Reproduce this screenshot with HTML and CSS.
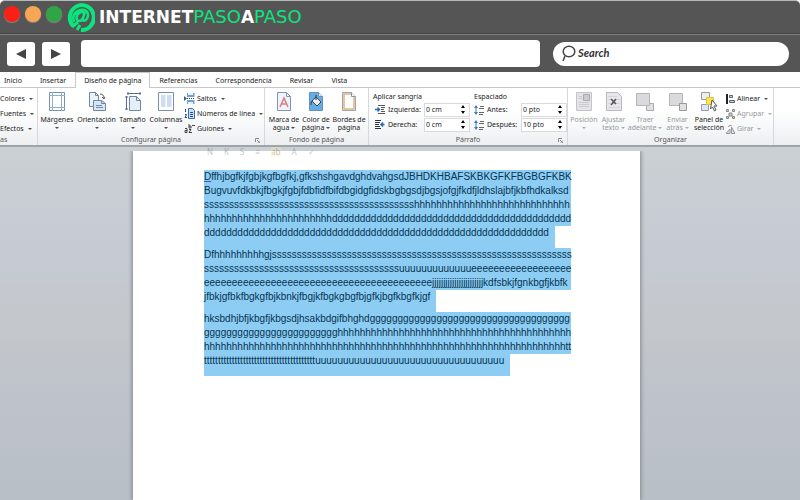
FILE: index.html
```html
<!DOCTYPE html>
<html lang="es">

<head>
    <meta charset="UTF-8">
    <meta name="viewport" content="width=device-width, initial-scale=1.0">
    <title>Internet Paso a Paso</title>
    <link rel="stylesheet" href="styles.css">
</head>

<body>
    <header class="browser">
        <div class="titlebar">
            <span class="dot red"></span>
            <span class="dot orange"></span>
            <span class="dot green"></span>
            <a class="logo" href="#">
                <svg width="28" height="30" viewBox="0 0 28 30" fill="none" stroke="#0be57d">
                    <path d="M6 24A12 12.500 0 1 1 14 28" stroke-width="4"/>
                    <path d="M5 25l6-5M10 28l3-5" stroke-width="3"/>
                    <path d="M18 10l-3 9M17.500 12c-2-4-8-1-8 4 0 4 5 4 6 0M15 18c3 2 6-1 6-5 0-4-4-6-8-5-6 2-8 7-6 12" stroke-width="2.500"/>
                </svg>
                <span class="brand">INTERNET<b>PASO</b>A<b>PASO</b></span>
            </a>
        </div>
        <form class="navbar">
            <button type="button" class="nav-btn" aria-label="Atrás"><svg width="10" height="10" viewBox="0 0 10 10"><path d="M0 5l10-5v10z" fill="#444"/></svg></button>
            <button type="button" class="nav-btn" aria-label="Adelante"><svg width="10" height="10" viewBox="0 0 10 10"><path d="M10 5L0 0v10z" fill="#444"/></svg></button>
            <input class="address" type="text" aria-label="Dirección">
            <label class="search">
                <svg width="15" height="17" viewBox="0 0 15 17" fill="none" stroke="#444" stroke-width="1.500"><ellipse cx="8" cy="6.500" rx="5.800" ry="5.300"/><path d="M4 11l-2 5"/></svg>
                <input type="text" value="Search" aria-label="Search">
            </label>
        </form>
    </header>

    <nav class="tabs">
        <a href="#">Inicio</a>
        <a href="#">Insertar</a>
        <a href="#" class="current">Diseño de página</a>
        <a href="#">Referencias</a>
        <a href="#">Correspondencia</a>
        <a href="#">Revisar</a>
        <a href="#">Vista</a>
    </nav>

    <section class="ribbon">
        <div class="group themes">
            <div class="tools">
                <div class="stack">
                    <button class="small">Colores <i></i></button>
                    <button class="small">Fuentes <i></i></button>
                    <button class="small">Efectos <i></i></button>
                </div>
            </div>
            <h2>as</h2>
        </div>

        <div class="group setup">
            <div class="tools">
                <button class="big">
                    <svg width="18" height="21" viewBox="0 0 18 21"><path d="M1.500 1.500h15v18h-15z" fill="#fff" stroke="#7b8fa8"/><path d="M4.500 1v19M13.500 1v19M1 4.500h16M1 16.500h16" stroke="#8eb0d0"/></svg>
                    <span>Márgenes</span><i></i>
                </button>
                <button class="big">
                    <svg width="18" height="21" viewBox="0 0 18 21" stroke="#7386a0"><path d="M1.500 1.500h6l3 3v11h-9z" fill="#eaf2fa"/><path d="M7.500 1.500v3h3" fill="none"/><path d="M5.500 9.500h8l4 3v7h-12z" fill="#d5e6f6"/><path d="M13.500 9.500v3h4M8 14.500h6M8 16.500h7" fill="none"/><path d="M12 3c3 0 4 2 4 4m-2-1l2 2 1-2" fill="none" stroke="#555"/></svg>
                    <span>Orientación</span><i></i>
                </button>
                <button class="big">
                    <svg width="18" height="21" viewBox="0 0 18 21"><path d="M5.500 5.500h7l4 4v10h-11z" fill="#e4effa" stroke="#7386a0"/><path d="M12.500 5.500v4h4" fill="none" stroke="#7386a0"/><path d="M3 2.500h14M4 1v3M16 1v3M2.500 5v14M1 6h3M1 18h3" stroke="#5a6ba0"/></svg>
                    <span>Tamaño</span><i></i>
                </button>
                <button class="big">
                    <svg width="18" height="21" viewBox="0 0 18 21"><path d="M1.500 1.500h15v18h-15z" fill="#fff" stroke="#7b8fa8"/><path d="M4 5h4.500M4 7h4.500M4 9h4.500M4 11h4.500M4 13h4.500M4 15h4.500M10 5h4.500M10 7h4.500M10 9h4.500M10 11h4.500M10 13h4.500M10 15h4.500" stroke="#9dbbe0"/></svg>
                    <span>Columnas</span><i></i>
                </button>
                <div class="stack">
                    <button class="small"><svg width="11" height="11" viewBox="0 0 11 11"><path d="M3 0h7.500v4H3zM3 7h7.500v4H3z" fill="#6fa0d6"/><path d="M4 0h5v2H4zM4 9h5v2H4z" fill="#e8f2fc"/><path d="M0 3l3 2.500L0 8z" fill="#34648f"/><path d="M3 5.500h8" stroke="#444" stroke-dasharray="1 1"/></svg>Saltos <i></i></button>
                    <button class="small"><svg width="11" height="11" viewBox="0 0 11 11"><path d="M4.500.5h4l2 2v8h-6z" fill="#c9dff5" stroke="#426ca8"/><path d="M1.500 1v3M1 6.500h1.500L1 9.500h2M6 4.500h3M6 6.500h3M6 8.500h3" stroke="#234f96" fill="none"/></svg>Números de línea <i></i></button>
                    <button class="small"><svg width="11" height="11" viewBox="0 0 11 11" fill="none" stroke="#444"><path d="M1 5.500h2v4H1v-2h2M5 1v4h2V3H5M5 6.500h2l-2 3h3M8 2.500h3"/></svg>Guiones <i></i></button>
                </div>
            </div>
            <h2>Configurar página</h2>
            <svg class="launcher" width="5" height="5" viewBox="0 0 5 5"><path d="M.5 4V.5H4M2 2l2.500 2.500M5 2.500V5H2.500" fill="none" stroke="#888"/></svg>
        </div>

        <div class="group background">
            <div class="tools">
                <button class="big">
                    <svg width="16" height="21" viewBox="0 0 16 21"><path d="M1.500 1.500h9l4 4v14h-13z" fill="#edf4fc" stroke="#8295b0"/><path d="M10.500 1.500v4h4" fill="none" stroke="#8295b0"/><path d="M4 16l4-9 4 9M5.500 13h5" fill="none" stroke="#dc7c7c" stroke-width="1.500"/></svg>
                    <span>Marca de<br>agua <i></i></span>
                </button>
                <button class="big">
                    <svg width="16" height="21" viewBox="0 0 16 21"><path d="M1.500 1.500h9l4 4v14h-13z" fill="#62aee8" stroke="#6c8fb8"/><path d="M10.500 1.500v4h4" fill="#dceafa" stroke="#6c8fb8"/><path d="M4 10l4-4 5 5-4 4z" fill="#e8edf2" stroke="#444"/><path d="M4 10c-1 1-1 3-1 4M8 9V4" stroke="#333" fill="none"/></svg>
                    <span>Color de<br>página <i></i></span>
                </button>
                <button class="big">
                    <svg width="16" height="21" viewBox="0 0 16 21"><path d="M1.500 1.500h9l4 4v14h-13z" fill="#fff" stroke="#9aa6b8"/><path d="M3 3h7l3 3v12H3z" fill="#fff" stroke="#e3b27c" stroke-width="1.500"/><path d="M10.500 1.500v4h4" fill="#fff" stroke="#8295b0"/></svg>
                    <span>Bordes de<br>página</span>
                </button>
            </div>
            <h2>Fondo de página</h2>
        </div>

        <div class="group paragraph">
            <div class="tools">
                <fieldset>
                    <legend>Aplicar sangría</legend>
                    <div class="field">
                        <svg width="10" height="9" viewBox="0 0 10 9"><path d="M3 .5h7M6 2.500h4M6 4.500h3M6 6.500h4M3 8.500h7" stroke="#555"/><path d="M0 4.500h4M2.500 2.500l2 2-2 2" stroke="#2868b8" fill="none" stroke-width="1.500"/></svg>
                        <label for="left">Izquierda:</label>
                        <span class="spin"><input id="left" type="text" value="0 cm"><svg width="4" height="9" viewBox="0 0 4 9"><path d="M2 0l2 3H0zM2 9l2-3H0z"/></svg></span>
                    </div>
                    <div class="field">
                        <svg width="10" height="9" viewBox="0 0 10 9"><path d="M0 .5h6M0 2.500h5M0 4.500h4M0 6.500h5M0 8.500h6" stroke="#333"/><path d="M9.500 4.500H6M8 2.500l-2 2 2 2" stroke="#2868b8" fill="none" stroke-width="1.500"/></svg>
                        <label for="right">Derecha:</label>
                        <span class="spin"><input id="right" type="text" value="0 cm"><svg width="4" height="9" viewBox="0 0 4 9"><path d="M2 0l2 3H0zM2 9l2-3H0z"/></svg></span>
                    </div>
                </fieldset>
                <fieldset class="spacing">
                    <legend>Espaciado</legend>
                    <div class="field">
                        <svg width="10" height="10" viewBox="0 0 10 10"><path d="M6 1.500h4M5 3.500h5M5 7.500h5M5 9.500h4" stroke="#666"/><path d="M2 0l2 3H0zM2 10l2-3H0zM1.500 3h1v4h-1z" fill="#3a78c4"/></svg>
                        <label for="before">Antes:</label>
                        <span class="spin"><input id="before" type="text" value="0 pto"><svg width="4" height="9" viewBox="0 0 4 9"><path d="M2 0l2 3H0zM2 9l2-3H0z"/></svg></span>
                    </div>
                    <div class="field">
                        <svg width="10" height="10" viewBox="0 0 10 10"><path d="M6 1.500h4M5 3.500h5M5 7.500h5M5 9.500h4" stroke="#666"/><path d="M2 0l2 3H0zM2 10l2-3H0zM1.500 3h1v4h-1z" fill="#3a78c4"/></svg>
                        <label for="after">Después:</label>
                        <span class="spin"><input id="after" type="text" value="10 pto"><svg width="4" height="9" viewBox="0 0 4 9"><path d="M2 0l2 3H0zM2 9l2-3H0z"/></svg></span>
                    </div>
                </fieldset>
            </div>
            <h2>Párrafo</h2>
            <svg class="launcher" width="5" height="5" viewBox="0 0 5 5"><path d="M.5 4V.5H4M2 2l2.500 2.500M5 2.500V5H2.500" fill="none" stroke="#888"/></svg>
        </div>

        <div class="group arrange">
            <div class="tools">
                <button class="big off">
                    <svg width="18" height="21" viewBox="0 0 18 21"><path d="M1.500 1.500h15v18h-15z" fill="#e4e4e8" stroke="#c4c4c8"/><path d="M8.500 3.500h6v6h-6z" fill="#ccc" stroke="#aaa"/><path d="M4 5.500h3M4 7.500h3M4 11.500h10M4 13.500h10M4 15.500h10" stroke="#ccc"/></svg>
                    <span>Posición</span><i></i>
                </button>
                <button class="big off">
                    <svg width="18" height="21" viewBox="0 0 18 21"><path d="M1.500 1.500h11l4 4v14h-15z" fill="#e8e8ec" stroke="#b8b8bd"/><path d="M3 5.500h9M3 8.500h12M3 12.500h12M3 16.500h12" stroke="#d4d4d4"/><path d="M6 8l5 5M11 8l-5 6" stroke="#555" stroke-width="1.500"/></svg>
                    <span>Ajustar<br>texto <i></i></span>
                </button>
                <button class="big off">
                    <svg width="20" height="21" viewBox="0 0 20 21"><path d="M11.500 12.500h7v7h-7z" fill="#e0e0e4" stroke="#aaa"/><path d="M1.500 2.500h13v12h-13z" fill="#dcd9de" stroke="#b4b4b8"/></svg>
                    <span>Traer<br>adelante <i></i></span>
                </button>
                <button class="big off">
                    <svg width="20" height="21" viewBox="0 0 20 21"><path d="M1.500 2.500h13v12h-13z" fill="#dcd9de" stroke="#b4b4b8"/><path d="M11.500 12.500h7v7h-7z" fill="#e0e0e4" stroke="#999"/></svg>
                    <span>Enviar<br>atrás <i></i></span>
                </button>
                <button class="big">
                    <svg width="18" height="21" viewBox="0 0 18 21"><path d="M1.500 1.500h8v7h-8z" fill="#eee" stroke="#999"/><path d="M1.500 13.500h7v6h-7z" fill="#dbe6f4" stroke="#99a"/><path d="M6.500 6.500h7v7h-7z" fill="#ffe54b" stroke="#e0c040"/><path d="M12 9l5 6h-3l2 4-1.500 1-2-4-2 2z" fill="#fff" stroke="#555"/></svg>
                    <span>Panel de<br>selección</span>
                </button>
                <div class="stack">
                    <button class="small"><svg width="9" height="10" viewBox="0 0 9 10"><path d="M1 0v10" stroke="#222" stroke-width="2"/><path d="M3.500 1.500h3v2h-3zM3.500 6.500h5v2h-5z" fill="#b9d2ee" stroke="#567"/></svg>Alinear <i></i></button>
                    <button class="small off"><svg width="9" height="10" viewBox="0 0 9 10"><path d="M.5.500h2v2h-2zM6.500.5h2v2h-2zM.5 7.500h2v2h-2zM6.500 7.500h2v2h-2zM3 4h3v3H3z" fill="#ccc" stroke="#888"/></svg>Agrupar <i></i></button>
                    <button class="small off"><svg width="9" height="10" viewBox="0 0 9 10"><path d="M0 9.500h4V5zM5.500 9.500V3L9 9.500zM2 3c1-2 3-2 4-1" fill="#ddd" stroke="#999"/></svg>Girar <i></i></button>
                </div>
            </div>
            <h2>Organizar</h2>
        </div>
    </section>

    <main class="desk">
        <div class="mini-toolbar" aria-hidden="true">
            <span>N</span><span>K</span><span>S</span><span>≡</span><span class="mark">ab</span><span>A</span><span>✓</span>
        </div>
        <article class="page">
            <p>
                <span><u>D</u>ffhjbgfkjfgbjkgfbgfkj,gfkshshgavdghdvahgsdJBHDKHBAFSKBKGFKFBGBGFKBK</span>
                <span>Bugvuvfdkbkjfbgkjfgbjfdbfidfbifdbgidgfidskbgbgsdjbgsjofgjfkdfjldhslajbfjkbfhdkalksd</span>
                <span>sssssssssssssssssssssssssssssssssssssssssshhhhhhhhhhhhhhhhhhhhhhhhhhhh</span>
                <span>hhhhhhhhhhhhhhhhhhhhhhhddddddddddddddddddddddddddddddddddddddddddd</span>
                <span>dddddddddddddddddddddddddddddddddddddddddddddddddddddddddddddd</span>
            </p>
            <p>
                <span>Dfhhhhhhhhhgjssssssssssssssssssssssssssssssssssssssssssssssssssssssssssss</span>
                <span>sssssssssssssssssssssssssssssssssssssssuuuuuuuuuuuuueeeeeeeeeeeeeeeeee</span>
                <span>eeeeeeeeeeeeeeeeeeeeeeeeeeeeeeeeeeeeeeeeejjjjjjjjjjjjjjjjjjjjjjjkdfsbkjfgnkbgfjkbfk</span>
                <span>jfbkjgfbkfbgkgfbjkbnkjfbgjkfbgkgbgfbjgfkjbgfkbgfkjgf</span>
            </p>
            <p>
                <span>hksbdhjbfjkbgfjkbgsdjhsakbdgifbhghdgggggggggggggggggggggggggggggggggggg</span>
                <span>gggggggggggggggggggggggghhhhhhhhhhhhhhhhhhhhhhhhhhhhhhhhhhhhhhhhhh</span>
                <span>hhhhhhhhhhhhhhhhhhhhhhhhhhhhhhhhhhhhhhhhhhhhhhhhhhhhhhhhhhhhhhhhhtt</span>
                <span>ttttttttttttttttttttttttttttttttttttttttuuuuuuuuuuuuuuuuuuuuuuuuuuuuuuuuuu</span>
            </p>
        </article>
    </main>
</body>

</html>
```
FILE: styles.css
```css
* {
    margin: 0;
    padding: 0;
    box-sizing: border-box;
}

body {
    display: flex;
    flex-direction: column;
    min-height: 100vh;
    background-color: #fff;
    font: 7px/9px "Noto Sans", sans-serif;
    color: #222;
}

a {
    color: inherit;
    text-decoration: none;
}

button,
input {
    border: 0;
    background: none;
    font: inherit;
    color: inherit;
}

/* browser frame */
.browser {
    background-color: #555;
    border-top: 1px solid #b5b9b5;
    border-radius: 5px 5px 0 0;
}

.titlebar {
    display: flex;
    align-items: center;
    gap: 5px;
    height: 33px;
    padding: 0 4px;
    border-bottom: 1px solid #444;
}

.dot {
    width: 16px;
    height: 16px;
    margin-bottom: 6px;
    border-radius: 50%;
    box-shadow: 0 1px 1px #888;
}

.red {
    background-color: #fb2015;
}

.orange {
    background-color: #f9a556;
}

.green {
    background-color: #2fa547;
}

.logo {
    display: flex;
    align-items: center;
}

.brand {
    padding-left: 4px;
    font: bold 17px/20px "DejaVu Sans", sans-serif;
    color: #fff;
}

.brand b {
    color: #0be57d;
    font-weight: normal;
    font-size: 18px;
}

.navbar {
    display: flex;
    align-items: center;
    height: 38px;
    padding: 0 11px 0 7px;
    border-top: 1px solid #808080;
}

.nav-btn {
    width: 28px;
    height: 24px;
    margin-right: 7px;
    background-color: #fff;
    border-radius: 3px;
}

.nav-btn svg {
    display: block;
    margin: 0 auto;
}

.address {
    flex: 1;
    height: 27px;
    margin: 0 13px 0 4px;
    padding: 0 8px;
    background-color: #fff;
    border-radius: 4px;
    font-size: 12px;
}

.search {
    display: flex;
    align-items: center;
    gap: 2px;
    width: 236px;
    height: 24px;
    padding: 0 8px;
    background-color: #fff;
    border-radius: 12px;
}

.search input {
    flex: 1;
    min-width: 0;
    height: 18px;
    padding-bottom: 3px;
    font: italic bold 11px/15px Lato, cursive;
    color: #333;
}

/* ribbon tabs */
.tabs {
    display: flex;
    height: 16px;
    padding-left: 4px;
    border-bottom: 1px solid #c5c8cc;
    line-height: 17px;
    white-space: nowrap;
}

.tabs a {
    padding: 0 9px;
}

.tabs a:first-child {
    padding-left: 0;
}

.tabs .current {
    height: 16px;
    padding: 0 8px;
    background-color: #fff;
    border: 1px solid #c5c8cc;
    border-width: 1px 1px 0;
    line-height: 15px;
}

/* ribbon */
.ribbon {
    display: flex;
    height: 59px;
    background: linear-gradient(#fff 40%, #eceef1);
    border-bottom: 2px solid #a0a5aa;
    white-space: nowrap;
}

.group {
    display: flex;
    flex-direction: column;
    position: relative;
    border-right: 1px solid #d5d8dc;
}

.tools {
    display: grid;
    height: 47px;
    padding-top: 3px;
}

.group h2 {
    font-size: 7px;
    line-height: 9px;
    font-weight: normal;
    text-align: center;
    color: #555;
}

.launcher {
    position: absolute;
    right: 4px;
    bottom: 2px;
}

.themes {
    width: 38px;
}

.themes h2 {
    text-align: left;
}

.setup {
    width: 227px;
}

.setup .tools {
    grid-template-columns: 38px 41px 31px 36px 1fr;
}

.background {
    width: 104px;
}

.background .tools {
    grid-template-columns: 32px 32px 34px;
    padding-left: 3px;
}

.paragraph {
    width: 199px;
}

.paragraph .tools {
    grid-template-columns: 101px 93px;
    padding-left: 4px;
}

.arrange {
    width: 206px;
}

.arrange .tools {
    grid-template-columns: 32px 27px 36px 29px 34px 1fr;
}

.big {
    display: flex;
    flex-direction: column;
    align-items: center;
    line-height: 8px;
}

.big svg {
    flex: none;
    margin-bottom: 4px;
}

.small {
    display: flex;
    align-items: center;
    gap: 2px;
    height: 15px;
}

.off {
    color: #999;
}

/* drop-down arrow */
i {
    display: inline-block;
    border: 2px solid transparent;
    border-top-color: currentColor;
    border-bottom: 0;
    vertical-align: middle;
    opacity: 0.8;
}

.big > i {
    margin-top: 3px;
}

.small i {
    margin-left: 2px;
}

fieldset {
    border: 0;
}

legend {
    height: 11px;
    line-height: 12px;
}

.field {
    display: flex;
    align-items: center;
    height: 15px;
    padding-left: 2px;
}

.spacing .field {
    padding-left: 0;
}

.field label {
    flex: 1;
    padding-left: 3px;
}

.spin {
    display: flex;
    align-items: center;
    width: 46px;
    height: 14px;
    margin-right: 4px;
    padding: 0 4px 0 1px;
    background-color: #fff;
    border: 1px solid #d8dadd;
}

.spacing .spin {
    margin-right: 0;
}

.spin input {
    flex: 1;
    min-width: 0;
}

/* document */
.desk {
    flex: 1;
    position: relative;
    padding: 4px 160px 0 133px;
    background: linear-gradient(#cbd0d4, #c6cad3 30%, #c4c7cb 50%, #bdc2cb 75%, #b9bfc6);
    display: flex;
}

.page {
    flex: 1;
    min-width: 0;
    padding: 19px 69px 0 71px;
    background-color: #fff;
    box-shadow: 0 0 4px 1px #83888c;
    clip-path: inset(0 -6px);
    font: 10px/14px "Liberation Sans", Arial, sans-serif;
    color: #063452;
    white-space: nowrap;
}

.page span {
    display: block;
    background-color: #8dcdf3;
}

.page span:last-child {
    width: fit-content;
    padding: 0 6px 8px 0;
}

.page u {
    text-decoration-color: #6a3fd8;
}

/* faded formatting bar over the page */
.mini-toolbar {
    display: flex;
    gap: 11px;
    position: absolute;
    left: 207px;
    top: 0;
    z-index: 1;
    font-size: 8px;
    line-height: 10px;
    opacity: 0.25;
}

.mark {
    background-color: #fff3a0;
}
```
